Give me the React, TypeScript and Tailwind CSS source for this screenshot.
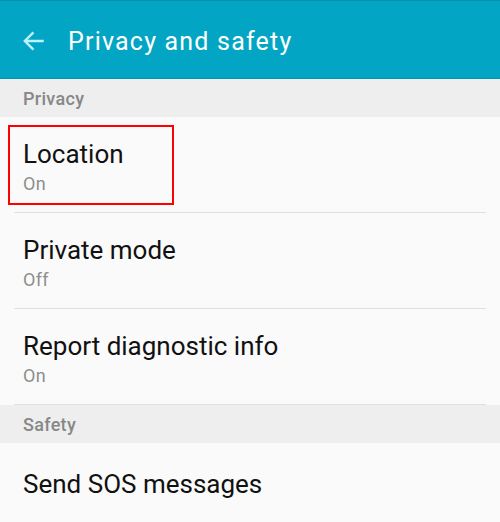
import React from "react";

function Item({ title, sub, boxed }: { title: string; sub?: string; boxed?: boolean }) {
  return (
    <div className={`relative px-[23px] flex flex-col justify-center ${sub ? "h-[96px] pt-[4px]" : "h-[80px] pt-[2px]"}`}>
      {boxed && (
        <div className="absolute left-[8px] top-[8px] w-[166px] h-[80px] border-2 border-[#ff0000]" />
      )}
      <div className="text-[26px] leading-[30px] text-[#111111]">{title}</div>
      {sub && <div className="text-[18px] leading-[24px] mt-[3px] tracking-[0.3px] text-[#8e8e8e]">{sub}</div>}
      <div className="absolute left-[14px] right-[14px] bottom-0 h-[1px] bg-[#e0e0e0]" />
    </div>
  );
}

function Section({ label }: { label: string }) {
  return (
    <div className="h-[38px] bg-[#eeeeee] px-[23px] flex items-center">
      <span className="text-[18px] font-medium tracking-[0.3px] text-[#878787]">{label}</span>
    </div>
  );
}

export default function App() {
  return (
    <div className="w-[500px] h-[522px] overflow-hidden bg-[#fafafa]" style={{ fontFamily: "Roboto, 'Noto Sans', sans-serif" }}>
      <div className="h-[79px] bg-[#02a6c4] flex items-center border-t border-[#0190aa] border-b border-b-[#0294b0]">
        <svg className="ml-[21px] mt-[2px]" width="26" height="26" viewBox="0 0 24 24" fill="none" stroke="#bdf1fb" strokeWidth="2.2" strokeLinecap="butt">
          <path d="M21 12H3.5M11.5 4L3.5 12L11.5 20" />
        </svg>
        <span className="ml-[21px] pt-[5px] text-[25px] tracking-[1.2px] text-white">Privacy and safety</span>
      </div>
      <Section label="Privacy" />
      <Item title="Location" sub="On" boxed />
      <Item title="Private mode" sub="Off" />
      <Item title="Report diagnostic info" sub="On" />
      <Section label="Safety" />
      <Item title="Send SOS messages" />
    </div>
  );
}
